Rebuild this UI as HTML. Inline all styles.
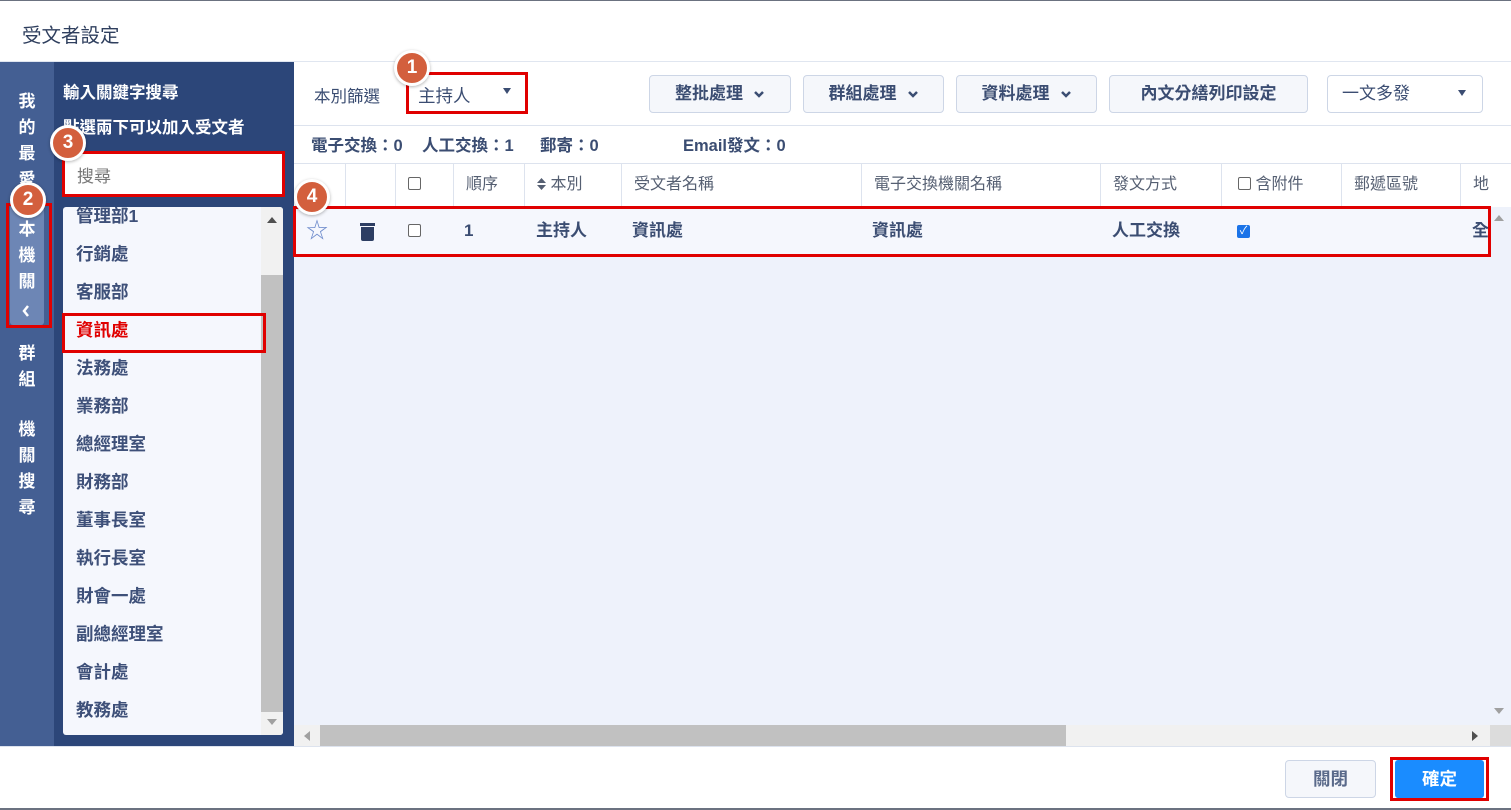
<!DOCTYPE html>
<html><head><meta charset="utf-8"><style>
*{box-sizing:border-box;margin:0;padding:0}
body{width:1511px;height:810px;overflow:hidden;background:#fff;font-family:"Liberation Sans","Noto Sans CJK TC",sans-serif;position:relative;color:#3b4d72}
.a{position:absolute}
.red{position:absolute;border:3px solid #e00000;z-index:5}
.badge{position:absolute;width:36px;height:36px;border-radius:50%;background:#d35f3d;border:3px solid #fff;color:#fff;font-weight:bold;font-size:19px;text-align:center;line-height:30px;z-index:6;box-shadow:0 1px 3px rgba(0,0,0,.3)}
.vt{position:absolute;left:0;width:54px;text-align:center;color:#fff;font-weight:bold;font-size:17px;line-height:26px}
.li{position:absolute;left:76px;font-size:17.5px;font-weight:bold;color:#3e5079}
.btn{position:absolute;top:75px;height:38px;border:1px solid #cdd6e6;border-radius:4px;background:#f5f7fb;font-size:17px;font-weight:bold;color:#3b4d72;line-height:36px;text-align:center}
.btn svg{vertical-align:middle;margin-left:10px}
.th{position:absolute;top:163px;height:44px;line-height:44px;font-size:16px;color:#555f72;border-left:1px solid #dde3ee;padding-left:12px}
.td{position:absolute;top:207px;height:48px;line-height:48px;font-size:17px;font-weight:bold;color:#3b4d72}
.cb{display:inline-block;width:13px;height:13px;border:1px solid #666;border-radius:2px;vertical-align:-1px;background:#fff}
.st{position:absolute;top:132px;font-size:16.5px;font-weight:bold}
</style></head><body>
<div class="a" style="left:0;top:0;width:1511px;height:1px;background:#6b7280"></div>
<div class="a" style="left:22px;top:19px;font-size:19.5px;color:#2f3f5e">受文者設定</div>
<div class="a" style="left:0;top:61px;width:1511px;height:1px;background:#e0e6f0"></div>

<div class="a" style="left:0;top:62px;width:54px;height:684px;background:#445f93"></div>
<div class="a" style="left:10px;top:205px;width:34px;height:120px;background:#6d86b5;border-radius:3px"></div>
<div class="vt" style="top:89px">我<br>的<br>最<br>愛</div>
<div class="vt" style="top:217px">本<br>機<br>關</div>
<svg class="a" style="left:21px;top:304px" width="10" height="14"><path d="M7 2 L3 7 L7 12" stroke="#fff" stroke-width="2.5" fill="none"/></svg>
<div class="vt" style="top:341px">群<br>組</div>
<div class="vt" style="top:417px">機<br>關<br>搜<br>尋</div>

<div class="a" style="left:54px;top:62px;width:240px;height:684px;background:#2c4679"></div>
<div class="a" style="left:63px;top:79px;color:#fff;font-weight:bold;font-size:16.5px">輸入關鍵字搜尋</div>
<div class="a" style="left:63px;top:114px;color:#fff;font-weight:bold;font-size:16.5px">點選兩下可以加入受文者</div>
<div class="a" style="left:64px;top:153px;width:219px;height:42px;background:#fff;font-size:17px;color:#777;padding:9px 0 0 13px">搜尋</div>
<div class="a" style="left:63px;top:207px;width:220px;height:528px;background:#f5f7fd;border-radius:3px;overflow:hidden">
 <div class="a" style="left:198px;top:0;width:22px;height:528px;background:#f1f1f1"></div>
 <div class="a" style="left:198px;top:68px;width:22px;height:437px;background:#c1c1c1"></div>
 <div class="a" style="left:204px;top:10px;border-left:5px solid transparent;border-right:5px solid transparent;border-bottom:6px solid #505050"></div>
 <div class="a" style="left:204px;top:512px;border-left:5px solid transparent;border-right:5px solid transparent;border-top:6px solid #a0a0a0"></div>
</div>
<div class="li" style="top:203px">管理部1</div>
<div class="li" style="top:241px">行銷處</div>
<div class="li" style="top:279px">客服部</div>
<div class="li" style="top:317px;color:#e00000">資訊處</div>
<div class="li" style="top:355px">法務處</div>
<div class="li" style="top:393px">業務部</div>
<div class="li" style="top:431px">總經理室</div>
<div class="li" style="top:469px">財務部</div>
<div class="li" style="top:507px">董事長室</div>
<div class="li" style="top:545px">執行長室</div>
<div class="li" style="top:583px">財會一處</div>
<div class="li" style="top:621px">副總經理室</div>
<div class="li" style="top:659px">會計處</div>
<div class="li" style="top:697px">教務處</div>

<div class="a" style="left:294px;top:62px;width:1217px;height:684px;background:#eef2fb"></div>
<div class="a" style="left:294px;top:62px;width:1217px;height:145px;background:#fff"></div>
<div class="a" style="left:294px;top:125px;width:1217px;height:1px;background:#dde3ee"></div>
<div class="a" style="left:294px;top:163px;width:1217px;height:1px;background:#dde3ee"></div>
<div class="a" style="left:314px;top:83px;font-size:16.5px">本別篩選</div>
<div class="a" style="left:418px;top:83px;font-size:17.5px">主持人</div>
<div class="a" style="left:503px;top:88px;border-left:4px solid transparent;border-right:4px solid transparent;border-top:6px solid #3b4d72"></div>
<div class="btn" style="left:649px;width:142px">整批處理<svg width="12" height="9"><path d="M2 2 L6 6 L10 2" stroke="#3b4d72" stroke-width="2.5" fill="none"/></svg></div>
<div class="btn" style="left:803px;width:141px">群組處理<svg width="12" height="9"><path d="M2 2 L6 6 L10 2" stroke="#3b4d72" stroke-width="2.5" fill="none"/></svg></div>
<div class="btn" style="left:956px;width:141px">資料處理<svg width="12" height="9"><path d="M2 2 L6 6 L10 2" stroke="#3b4d72" stroke-width="2.5" fill="none"/></svg></div>
<div class="btn" style="left:1109px;width:199px">內文分繕列印設定</div>
<div class="btn" style="left:1327px;width:156px;background:#fff;text-align:left;padding-left:14px;font-weight:normal">一文多發</div>
<div class="a" style="left:1458px;top:90px;border-left:4px solid transparent;border-right:4px solid transparent;border-top:6px solid #3b4d72"></div>
<div class="st" style="left:311px">電子交換：0</div>
<div class="st" style="left:422px">人工交換：1</div>
<div class="st" style="left:540px">郵寄：0</div>
<div class="st" style="left:683px">Email發文：0</div>

<div class="th" style="left:345px;width:50px"></div>
<div class="th" style="left:395px;width:58px"><span class="cb"></span></div>
<div class="th" style="left:453px;width:71px">順序</div>
<div class="th" style="left:524px;width:97px"><svg width="9" height="12" style="vertical-align:-1px"><path d="M4.5 0 L9 5 L0 5Z M4.5 12 L9 7 L0 7Z" fill="#555f72"/></svg> 本別</div>
<div class="th" style="left:621px;width:240px">受文者名稱</div>
<div class="th" style="left:861px;width:239px">電子交換機關名稱</div>
<div class="th" style="left:1100px;width:121px">發文方式</div>
<div class="th" style="left:1221px;width:120px;padding-left:16px"><span class="cb"></span> 含附件</div>
<div class="th" style="left:1341px;width:119px">郵遞區號</div>
<div class="th" style="left:1460px;width:40px">地</div>
<div class="a" style="left:294px;top:207px;width:1196px;height:48px;background:#f5f7fd"></div>
<div class="td" style="left:306px;font-size:22px;font-weight:normal;color:#6f8ccc">☆</div>
<div class="a" style="left:360px;top:223px;width:15px;height:3px;background:#2d3e63"></div>
<div class="a" style="left:361px;top:227px;width:13px;height:14px;background:#2d3e63;border-radius:0 0 2px 2px"></div>
<div class="td" style="left:408px;font-weight:normal"><span class="cb"></span></div>
<div class="td" style="left:464px">1</div>
<div class="td" style="left:536px">主持人</div>
<div class="td" style="left:632px">資訊處</div>
<div class="td" style="left:872px">資訊處</div>
<div class="td" style="left:1112px">人工交換</div>
<div class="a" style="left:1237px;top:225px;width:13px;height:13px;background:#1a73e8;border-radius:2px;color:#fff;font-size:11px;line-height:13px;text-align:center">✓</div>
<div class="td" style="left:1472px">全</div>

<div class="a" style="left:1490px;top:207px;width:21px;height:518px;background:#eef2fb"></div>
<div class="a" style="left:1494px;top:215px;border-left:5px solid transparent;border-right:5px solid transparent;border-bottom:6px solid #a0a0a0"></div>
<div class="a" style="left:1494px;top:708px;border-left:5px solid transparent;border-right:5px solid transparent;border-top:6px solid #a0a0a0"></div>
<div class="a" style="left:294px;top:725px;width:1196px;height:21px;background:#f1f1f1"></div>
<div class="a" style="left:320px;top:725px;width:746px;height:21px;background:#c1c1c1"></div>
<div class="a" style="left:1490px;top:725px;width:21px;height:21px;background:#dcdcdc"></div>
<div class="a" style="left:1472px;top:731px;border-top:5px solid transparent;border-bottom:5px solid transparent;border-left:6px solid #505050"></div>
<div class="a" style="left:304px;top:731px;border-top:5px solid transparent;border-bottom:5px solid transparent;border-right:6px solid #a0a0a0"></div>
<div class="a" style="left:0;top:746px;width:1511px;height:1px;background:#dde3ee"></div>

<div class="a" style="left:1285px;top:760px;width:91px;height:38px;border:1px solid #cdd6e6;border-radius:4px;background:#f5f7fb;font-size:17.5px;font-weight:bold;text-align:center;line-height:36px;color:#5a6a8a">關閉</div>
<div class="a" style="left:1395px;top:760px;width:89px;height:38px;border-radius:3px;background:#1a8cff;font-size:17.5px;font-weight:bold;text-align:center;line-height:38px;color:#fff">確定</div>
<div class="a" style="left:0;top:808px;width:1511px;height:2px;background:#6b7280"></div>

<div class="red" style="left:406px;top:72px;width:122px;height:42px"></div>
<div class="red" style="left:6px;top:203px;width:46px;height:125px"></div>
<div class="red" style="left:62px;top:151px;width:223px;height:46px"></div>
<div class="red" style="left:62px;top:313px;width:204px;height:40px"></div>
<div class="red" style="left:293px;top:206px;width:1198px;height:51px"></div>
<div class="red" style="left:1390px;top:757px;width:99px;height:44px"></div>
<div class="badge" style="left:394px;top:50px">1</div>
<div class="badge" style="left:10px;top:182px">2</div>
<div class="badge" style="left:50px;top:125px">3</div>
<div class="badge" style="left:294px;top:179px">4</div>
</body></html>
